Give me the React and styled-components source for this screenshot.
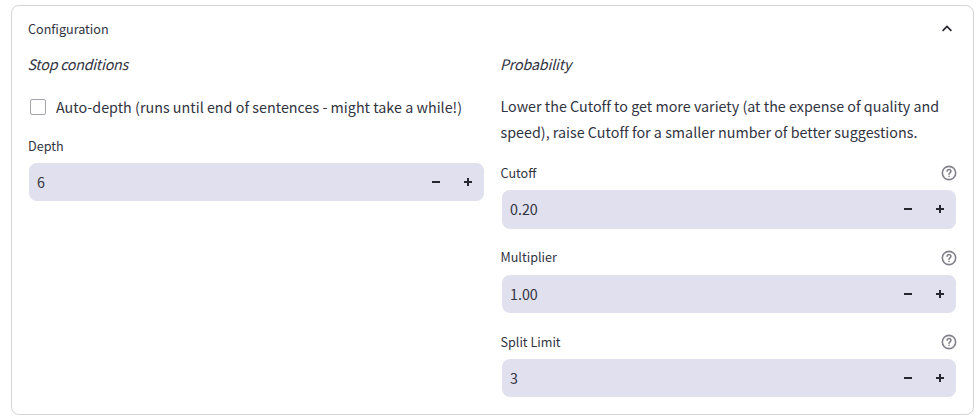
import React from "react";
import styled, { createGlobalStyle } from "styled-components";

const GlobalStyle = createGlobalStyle`
  *, *::before, *::after { box-sizing: border-box; }
  body {
    margin: 0;
    background: #fff;
    color: #31333f;
    font-family: "Source Sans Pro", "Noto Sans CJK SC", sans-serif;
    font-size: 14.3px;
    overflow: hidden;
  }
  p { margin: 0; }
`;

const Page = styled.main`
  padding: 5px 4px 4px 11px;
`;

const Card = styled.section`
  height: 410px;
  padding: 0 16px;
  border: 1px solid #d3d4d5;
  border-radius: 8px;
`;

const Header = styled.header`
  display: flex;
  align-items: center;
  justify-content: space-between;
  height: 45px;
  padding-right: 2px;
  font-size: 12.6px;
`;

const Columns = styled.div`
  display: grid;
  grid-template-columns: 456px 456.5px;
  column-gap: 16.5px;
`;

const Column = styled.div`
  display: flex;
  flex-direction: column;
`;

const Heading = styled.p`
  height: 26px;
  line-height: 25px;
  margin-left: -0.5px;
  font-style: italic;
  letter-spacing: ${(p) => p.$spacing || 0}px;
`;

const Paragraph = styled.p`
  margin: 16px 0 20px;
  line-height: 26px;
  letter-spacing: 0.01px;
  white-space: nowrap;
`;

const CheckLabel = styled.label`
  display: flex;
  align-items: center;
  gap: 10px;
  height: 26px;
  margin: 17px 0 18px;
  padding-left: 2px;
  line-height: 26px;
  letter-spacing: 0.02px;
  white-space: nowrap;
`;

const CheckBox = styled.span`
  width: 16px;
  height: 16px;
  border: 1px solid #a3a4a9;
  border-radius: 2px;
`;

const Field = styled.div`
  margin-bottom: ${(p) => p.$gap || 0}px;
`;

const FieldLabel = styled.div`
  display: flex;
  align-items: center;
  justify-content: space-between;
  height: 15px;
  margin-bottom: 10px;
  font-size: 12.6px;
  line-height: 15px;
`;

const LabelText = styled.span`
  padding-bottom: ${(p) => p.$raise || 0}px;
`;

const NumberBox = styled.div`
  display: flex;
  align-items: flex-start;
  height: ${(p) => p.$height || 38}px;
  width: ${(p) => p.$width}px;
  margin-left: ${(p) => p.$inset || 1}px;
  padding-left: 8px;
  border-radius: 8px;
  background: #e1e0ee;
`;

const Value = styled.span`
  flex: 1;
  line-height: 38px;
`;

const StepButton = styled.button`
  display: flex;
  align-items: center;
  justify-content: center;
  width: 32px;
  height: 38px;
  padding: 0;
  border: 0;
  background: none;
  color: #262730;
`;

const Icon = styled.svg`
  display: block;
  flex: none;
`;

const Minus = () => (
  <Icon width="8" height="8" viewBox="0 0 8 8" fill="currentColor">
    <path d="M0 3h8v2H0z" />
  </Icon>
);

const Plus = () => (
  <Icon width="8" height="8" viewBox="0 0 8 8" fill="currentColor">
    <path d="M3 0h2v3h3v2H5v3H3V5H0V3h3z" />
  </Icon>
);

const Chevron = () => (
  <Icon width="16" height="16" viewBox="0 0 16 16" fill="none" stroke="#262730" strokeWidth="1.7">
    <path d="M3.6 9.9 8 5.5l4.4 4.4" />
  </Icon>
);

const Help = () => (
  <Icon width="16" height="16" viewBox="0 0 24 24" fill="none" stroke="#808189" strokeWidth="2.4" strokeLinecap="round" strokeLinejoin="round">
    <circle cx="12" cy="12" r="10" />
    <path d="M9.2 9.2a2.8 2.8 0 0 1 5.6.6c0 1.9-2.8 2.2-2.8 4M12 17h.01" />
  </Icon>
);

const NumberField = ({ label, value, help, gap, raise, inset, width, height }) => (
  <Field $gap={gap}>
    <FieldLabel>
      <LabelText $raise={raise}>{label}</LabelText>
      {help && <Help />}
    </FieldLabel>
    <NumberBox $height={height} $width={width} $inset={inset}>
      <Value>{value}</Value>
      <StepButton aria-label={`Decrease ${label}`}><Minus /></StepButton>
      <StepButton aria-label={`Increase ${label}`}><Plus /></StepButton>
    </NumberBox>
  </Field>
);

export default function App() {
  return (
    <>
      <GlobalStyle />
      <Page>
        <Card>
          <Header>
            <span>Configuration</span>
            <Chevron />
          </Header>
          <Columns>
            <Column>
              <Heading $spacing={-0.28}>Stop conditions</Heading>
              <CheckLabel>
                <CheckBox role="checkbox" aria-checked="false" />
                <span>Auto-depth (runs until end of sentences - might take a while!)</span>
              </CheckLabel>
              <NumberField label="Depth" value="6" width={455} />
            </Column>
            <Column>
              <Heading $spacing={-0.2}>Probability</Heading>
              <Paragraph>
                Lower the Cutoff to get more variety (at the expense of quality and
                <br />
                speed), raise Cutoff for a smaller number of better suggestions.
              </Paragraph>
              <NumberField label="Cutoff" value="0.20" help gap={21} inset={1.5} width={454} height={39} />
              <NumberField label="Multiplier" value="1.00" help gap={21} raise={2} inset={1.5} width={454} />
              <NumberField label="Split Limit" value="3" help inset={1.5} width={454} />
            </Column>
          </Columns>
        </Card>
      </Page>
    </>
  );
}
